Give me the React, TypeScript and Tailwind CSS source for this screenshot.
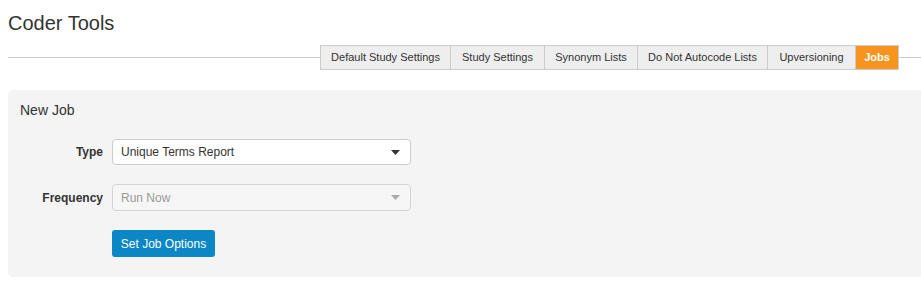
import React from "react";

const tabs = [
  { label: "Default Study Settings", w: "w-[131px]" },
  { label: "Study Settings", w: "w-[94px]" },
  { label: "Synonym Lists", w: "w-[93px]" },
  { label: "Do Not Autocode Lists", w: "w-[130px]" },
  { label: "Upversioning", w: "w-[88px]" },
];

function Caret({ color }: { color: string }) {
  return (
    <svg width="9" height="5" viewBox="0 0 9 5" className="block">
      <path d="M0 0 L9 0 L4.5 5 Z" fill={color} />
    </svg>
  );
}

export default function App() {
  return (
    <div
      className="w-[921px] h-[290px] bg-white text-[#333] overflow-hidden"
      style={{ fontFamily: '"Liberation Sans", Arial, sans-serif' }}
    >
      <div className="pl-[8px] pt-[11px]">
        <h1 className="text-[20px] leading-[24px] font-normal text-[#333]">Coder Tools</h1>
      </div>
      <div className="flex items-center pl-[8px] mt-[10px] h-[25px]">
        <div className="flex-1 h-px bg-[#cccccc]" />
        <div className="flex h-[25px]">
          {tabs.map((t, i) => (
            <div
              key={t.label}
              className={`${t.w} h-[25px] flex items-center justify-center bg-[#eeeeee] border-y border-r border-[#cccccc] ${i === 0 ? "border-l" : ""} text-[11px] text-[#333] whitespace-nowrap`}
            >
              {t.label}
            </div>
          ))}
          <div className="w-[43px] h-[25px] flex items-center justify-center bg-[#f7941e] border-y border-r border-[#cccccc] text-[11px] font-bold text-white">
            Jobs
          </div>
        </div>
        <div className="w-[22px] h-px bg-[#cccccc]" />
      </div>

      <div className="ml-[8px] mt-[20px] h-[187px] bg-[#f4f4f4] rounded-l-[5px] pl-[12px] pt-[10px]">
        <div className="text-[14px] leading-[20px] text-[#333]">New Job</div>

        <div className="flex items-center mt-[19px] gap-[9px]">
          <div className="w-[83px] text-right text-[12px] font-bold text-[#333]">Type</div>
          <div className="w-[299px] h-[26px] bg-white border border-[#cccccc] rounded-[4px] flex items-center justify-between pl-[8px] pr-[10px]">
            <span className="text-[12px] text-[#333]">Unique Terms Report</span>
            <Caret color="#333333" />
          </div>
        </div>

        <div className="flex items-center mt-[19px] gap-[9px]">
          <div className="w-[83px] text-right text-[12px] font-bold text-[#333]">Frequency</div>
          <div className="w-[299px] h-[27px] bg-[#f6f6f6] border border-[#d4d4d4] rounded-[4px] flex items-center justify-between pl-[8px] pr-[10px]">
            <span className="text-[12px] text-[#999999]">Run Now</span>
            <Caret color="#aaaaaa" />
          </div>
        </div>

        <div className="ml-[92px] mt-[19px]">
          <button className="w-[103px] h-[27px] bg-[#0b87c6] rounded-[3px] text-white text-[12px] flex items-center justify-center">
            Set Job Options
          </button>
        </div>
      </div>
    </div>
  );
}
